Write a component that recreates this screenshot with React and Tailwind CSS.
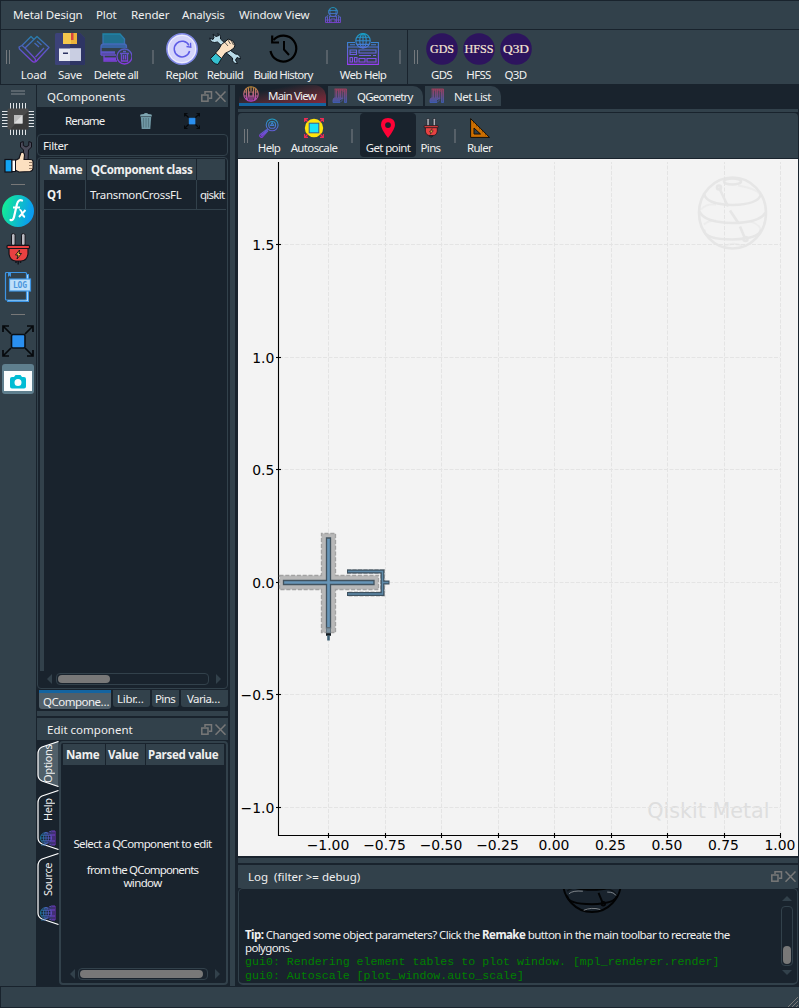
import React from "react";

/* ---------- icons ---------- */

const Svg = ({ s = 32, vb = 32, children, className = "" }) => (
  <svg width={s} height={s} viewBox={`0 0 ${vb} ${vb}`} fill="none" className={`block shrink-0 ${className}`}>
    {children}
  </svg>
);

const Grad = ({ id, a = "#1b86a4", b = "#8a35e0", horizontal = false }) => (
  <defs>
    <linearGradient id={id} x1="0" y1="0" x2={horizontal ? "32" : "0"} y2={horizontal ? "0" : "32"} gradientUnits="userSpaceOnUse">
      <stop offset="0" stopColor={a} />
      <stop offset="1" stopColor={b} />
    </linearGradient>
  </defs>
);

const LoadIcon = () => (
  <Svg>
    <Grad id="g-load" />
    <g stroke="url(#g-load)" strokeWidth="1.3" strokeLinejoin="round">
      <path d="M1 14 L4 12.5 L7 15 L19 3.5 L31 14.5 L18 28.5 Q16 30 14 28 L1.5 16 Z" />
      <path d="M7 15 L17 25.5 Q18 27 17 28.5 M4 12.5 L13 3.5 L16 6.5 M19 8 L23.5 12 M16.5 10 L21 14 M26 15 L17.5 24" />
    </g>
  </Svg>
);

const SaveIcon = () => (
  <Svg>
    <path d="M1 1.5 Q1 0 2.5 0 H26 L31 5 V30.5 Q31 32 29.500 32 H2.500 Q1 32 1 30.500 Z" fill="#3c4279" />
    <path d="M16 0 H26 L31 5 V30.500 Q31 32 29.500 32 H16 Z" fill="#2e3563" />
    <path d="M9 0 H23 V11 H9 Z" fill="#f5c84c" />
    <path d="M17 0 H23 V11 H17 Z" fill="#eab23a" />
    <path d="M17 0 H19.500 V7 H17 Z" fill="#d9433f" />
    <path d="M5 15.500 H27 V28 H5 Z" fill="#e6e9f2" />
    <path d="M16 15.500 H27 V28 H16 Z" fill="#c9cee2" />
    <path d="M9 19.500 H14 V21 H9 Z" fill="#2e3563" />
  </Svg>
);

const DeleteIcon = () => (
  <Svg>
    <Grad id="g-del" a="#1b86a4" b="#8a35e0" />
    <path d="M3 11 V1 H20 L24.500 6 V11 Z" fill="#20708f" />
    <path d="M1 14 Q1 11 4 11 H24 Q26.500 11 26.500 14 V15 H1 Z" fill="#3763a2" />
    <g stroke="url(#g-del)" strokeWidth="1.300">
      <path d="M3 12 V1 H20 L24.500 6 V12 M1 22 V14 Q1 11 4 11 H24 Q26.500 11 26.500 14 V15 M1 22 H16 M4 22 V28 H17" />
      <path d="M4 26 H16" strokeWidth="3.200" />
      <path d="M1 19.500 H15" strokeWidth="2.500" />
      <circle cx="24.500" cy="23.500" r="7.500" fill="#32414b" />
      <path d="M20 20.500 H29 M21.500 20.500 V28 H27.500 V20.500 M23 18.500 H26 M23.500 22 V26.500 M25.500 22 V26.500" />
    </g>
  </Svg>
);

const ReplotIcon = () => (
  <Svg>
    <circle cx="16" cy="16" r="15.200" fill="#d4d4fb" stroke="#7f88e6" strokeWidth="1.500" />
    <circle cx="16" cy="16" r="13.700" stroke="#f0f0ff" strokeWidth="1" />
    <path d="M23 12.500 A7.800 7.800 0 1 0 23.600 18" stroke="#5e5ce6" strokeWidth="1.500" />
    <path d="M20.500 13.500 L24.800 14.200 L24.500 9.800" stroke="#5e5ce6" strokeWidth="1.300" />
  </Svg>
);

const RebuildIcon = () => (
  <Svg>
    <g stroke="#101820" strokeWidth="1" strokeLinejoin="round">
      <path d="M4 1 L7 3.500 L10 2.500 L8.500 .6 Q12 1 11.500 6 L19 13 L16 16 L8.500 9 Q2 11 .6 5 L4 6.500 L5 4.500 Z" fill="#b9dbe8" />
      <path d="M1.500 25.500 L7 20 L12.500 25.500 L9 31.500 Q4 31 1.500 25.500 Z" fill="#35c0cf" />
      <path d="M18 15 L26.500 21 Q31 21 31.500 26 L28 24.500 L26.500 27 L28.500 30.500 Q23 31 23.500 25 L15 18 Z" fill="#b9dbe8" />
      <path d="M6.500 20 L10 16 L12.500 11.500 L17 8 L19 6 L24 8 L26 12 L25 15 L20 18.500 L16.500 20 L12.500 25.500 Z" fill="#fbe1c3" />
      <path d="M18.500 6.500 L21.500 11 M15.500 9 L19 13 M22.500 8 L24.500 12" strokeWidth=".7" />
    </g>
  </Svg>
);

const HistoryIcon = () => (
  <Svg>
    <path d="M6.500 7 A13 13 0 1 1 3.500 18" stroke="#000" strokeWidth="2.200" />
    <path d="M5.200 2.500 V9.500 H12" stroke="#000" strokeWidth="2.200" />
    <path d="M17 8 V16.500 L22 22" stroke="#000" strokeWidth="2" />
  </Svg>
);

const GlobeLines = ({ cx, cy, r }) => (
  <>
    <circle cx={cx} cy={cy} r={r} />
    <ellipse cx={cx} cy={cy} rx={r * 0.45} ry={r} />
    <path d={`M${cx - r} ${cy} H${cx + r} M${cx} ${cy - r} V${cy + r} M${cx - r * 0.85} ${cy - r * 0.5} H${cx + r * 0.85} M${cx - r * 0.85} ${cy + r * 0.5} H${cx + r * 0.85}`} />
  </>
);

const WebHelpIcon = () => (
  <Svg>
    <Grad id="g-web" a="#12a2c4" b="#9a3cf5" />
    <g stroke="url(#g-web)" strokeWidth="1.100">
      <path d="M8 9.500 H.6 V31.400 H31.400 V9.500 H24" />
      <GlobeLines cx={16} cy={7.800} r={7.200} />
      <path d="M.6 14 H31.400 M3 11.800 H8 M24 11.800 H29 M3 17 H9.500 V21.500 H3 Z M3 19.200 H9.500 M12 17 H29 V20 H12 Z M12 22.500 H24 M26 22.500 H29 M3 24.500 H5.500 V29 H3 Z M7.500 24.500 H10 V29 H7.500 Z M12 25.500 H18 V29 H12 Z M20 25.500 H29 V29 H20 Z" />
    </g>
  </Svg>
);

const MenuGlobeIcon = () => (
  <Svg s={16} vb={32}>
    <Grad id="g-mg" a="#1b9abf" b="#7b3fd0" />
    <g stroke="url(#g-mg)" strokeWidth="1.800">
      <circle cx="16" cy="10" r="9" />
      <path d="M10 3 V17 M22 3 V17 M7 7 H25 M8 13 H24 M6 16 L4 20 H1 V31 H12 V24 H20 V31 H31 V20 H28 L26 16 M8 19 H24 M5 20 V31 M9 20 V31 M23 20 V31 M27 20 V31 M1 26 H12 M20 26 H31 M12 31 H20" />
    </g>
  </Svg>
);

const Disc = ({ children }) => (
  <Svg>
    <circle cx="16" cy="16" r="15.800" fill="#2d145e" />
    <text x="16" y="19.800" textAnchor="middle" fontFamily="'Liberation Serif', serif" fontSize="12" letterSpacing="0" fill="#f7e6d4" stroke="#f7e6d4" strokeWidth=".2" textLength={children === "HFSS" ? 29 : children === "Q3D" ? 26 : 24} lengthAdjust="spacingAndGlyphs">
      {children}
    </text>
  </Svg>
);

const ChipIcon = () => (
  <Svg>
    <path d="M8.500 0 V32 M11.500 0 V32 M14.500 0 V32 M17.500 0 V32 M20.500 0 V32 M23.500 0 V32 M0 8.500 H32 M0 11.500 H32 M0 14.500 H32 M0 17.500 H32 M0 20.500 H32 M0 23.500 H32" stroke="#dfe3e6" strokeWidth="1" />
    <rect x="5.500" y="5.500" width="21" height="21" rx="1.500" fill="#4a4a4a" />
    <path d="M26.500 8 V25.500 Q26.500 26.500 25.500 26.500 H8 Z" fill="#3a3a3a" />
    <rect x="12" y="12" width="8.500" height="8.500" fill="#bdbdbd" />
    <path d="M20.500 12 V20.500 H12 Z" fill="#dcdcdc" />
  </Svg>
);

const ThumbIcon = () => (
  <Svg>
    <path d="M18.500 1.500 V6 L21.500 9 V14 L22 20 H26 L26.500 9 L29.500 6 V1.500 L26.800 .6 V4.500 L24 6 L21.300 4.500 V.6 Z" fill="#4b4b5a" stroke="#101018" strokeWidth="1" />
    <path d="M13 19.500 L17 17.500 L19 11.500 Q22 10.500 22.500 14 L22 18.500 H28 Q31 18.500 31 20.500 V27 Q31 30 28 30.500 L17 31 L13 29 Z" fill="#fce0c0" stroke="#101018" strokeWidth="1.100" />
    <path d="M27 21.500 H30.500 M27 24.500 H30.500 M27 27.500 H30.500" stroke="#7c6350" strokeWidth=".8" />
    <rect x="3" y="18.500" width="7" height="12.500" fill="#12a5f4" stroke="#101018" strokeWidth="1.200" />
    <rect x="10" y="19" width="3.500" height="11.500" fill="#fff" stroke="#101018" strokeWidth="1" />
  </Svg>
);

const FxIcon = () => (
  <Svg>
    <defs>
      <linearGradient id="g-fx" x1="0" y1="0" x2="1" y2=".25">
        <stop offset="0" stopColor="#14f58c" />
        <stop offset="1" stopColor="#0a9cf0" />
      </linearGradient>
    </defs>
    <circle cx="16" cy="16" r="16" fill="url(#g-fx)" />
    <path d="M20 5.500 Q16.500 4 15 9 L12 22 Q11 26 8.500 25" stroke="#fff" strokeWidth="2.200" strokeLinecap="round" />
    <path d="M11 12.500 H18" stroke="#fff" strokeWidth="2" />
    <path d="M17.500 15 Q19 14.500 20 18 T23 22 M23.500 15 L17 22" stroke="#fff" strokeWidth="1.900" />
  </Svg>
);

const PlugIcon = ({ s = 32 }) => (
  <Svg s={s}>
    <rect x="9.500" y=".6" width="3.600" height="12" rx="1.500" fill="#b9b9c0" stroke="#15151c" strokeWidth="1" />
    <rect x="19.500" y=".6" width="3.600" height="12" rx="1.500" fill="#b9b9c0" stroke="#15151c" strokeWidth="1" />
    <path d="M7 15 H26 V21 Q25 28 19 28 H14 Q8 28 7 21 Z" fill="#e84141" stroke="#15151c" strokeWidth="1.200" />
    <rect x="5" y="12.300" width="22.500" height="3.200" rx="1" fill="#e84141" stroke="#15151c" strokeWidth="1.200" />
    <path d="M17.500 17 L13.500 22 H16 L15 26 L19.500 20.500 H17 Z" fill="#f9c440" stroke="#15151c" strokeWidth=".9" />
    <path d="M14 28 V30 M18.500 28 V30 M16.200 28 V31.500" stroke="#15151c" strokeWidth="1.500" />
  </Svg>
);

const LogIcon = () => (
  <Svg>
    <rect x="5.500" y="3.500" width="21" height="27" fill="#b6dcf8" stroke="#3d95e4" strokeWidth="1" />
    <rect x="3.500" y="1.500" width="21" height="27.500" rx="1" fill="#32414b" stroke="#3d95e4" strokeWidth="1.200" />
    <path d="M6 2 V6 L7.500 4.500 L9 6 V2" fill="#3d95e4" />
    <rect x="7.500" y="8" width="21" height="12" fill="#bfe0fa" stroke="#3d95e4" strokeWidth="1.200" />
    <text x="18" y="17" textAnchor="middle" fontFamily="'DejaVu Sans Mono', monospace" fontWeight="700" fontSize="8" fill="#4c97dd" textLength="14">LOG</text>
  </Svg>
);

const FitIcon = ({ s = 32 }) => (
  <Svg s={s}>
    <path d="M9 9 L1.500 1.500 M23 9 L30.500 1.500 M9 23 L1.500 30.500 M23 23 L30.500 30.500 M1 7 V1 H7 M25 1 H31 V7 M1 25 V31 H7 M25 31 H31 V25" stroke="#06090c" strokeWidth={s > 20 ? 1.7 : 2.4} />
    <rect x="9.500" y="9.500" width="13.500" height="13.500" rx="1.500" fill="#2a8fef" stroke="#0a0f14" strokeWidth={s > 20 ? 1.6 : 0.4} />
  </Svg>
);

const TrashIcon = () => (
  <svg width="12" height="16" viewBox="0 0 12 16" className="block">
    <path d="M.2 2.500 Q0 1.300 2 1.200 L4 1 Q4 0 6 0 Q8 0 8 1 L10 1.200 Q12 1.300 11.800 2.500 V3.500 H.2 Z" fill="#7fa6b2" />
    <path d="M.8 4 H11.200 L10.300 16 H1.700 Z" fill="#6f97a4" />
    <path d="M3.500 5 V14.500 M6 5 V14.500 M8.500 5 V14.500" stroke="#51717c" strokeWidth=".8" />
  </svg>
);

const SearchIcon = () => (
  <Svg s={20}>
    <Grad id="g-search" a="#1ba4c4" b="#8a35e0" />
    <g stroke="url(#g-search)" strokeWidth="1.700">
      <circle cx="21" cy="11" r="9.500" />
      <circle cx="21" cy="11" r="5.500" />
      <path d="M18.500 12 L21 7.500 L23.500 12 Z M14 18 L11 20 M11.500 19 L2 26 Q0 29 2 30 Q4 32 6 30 L14 21 Z" />
      <path d="M3.500 28.500 L12 21" strokeWidth="3" />
    </g>
  </Svg>
);

const AutoscaleIcon = () => (
  <Svg s={20} vb={20}>
    <circle cx="10" cy="10" r="9.200" fill="#ffe40a" />
    <rect x="5.200" y="5.200" width="9.600" height="9.600" fill="#19e3f8" stroke="#2c5d9a" strokeWidth="1" />
    <g stroke="#ee2c55" strokeWidth="1.100">
      <path d="M4 4 L1 1 M16 4 L19 1 M4 16 L1 19 M16 16 L19 19 M.6 4 V.6 H4 M16 .6 H19.400 V4 M.6 16 V19.400 H4 M16 19.400 H19.400 V16" />
    </g>
  </Svg>
);

const PinIcon = () => (
  <Svg s={20} vb={20}>
    <path fillRule="evenodd" d="M10 0 Q17 0 17 7 Q17 11 10 20 Q3 11 3 7 Q3 0 10 0 Z M10 4.200 A2.900 2.900 0 1 0 10 10 A2.900 2.900 0 1 0 10 4.200 Z" fill="#ff0236" />
  </Svg>
);

const RulerIcon = () => (
  <Svg s={20} vb={20}>
    <path fillRule="evenodd" d="M.6 .6 L19.500 19.400 H.6 Z M4 10 V16 H10.500 Z" fill="#cc6e00" stroke="#14100a" strokeWidth="1" />
    <path d="M3 5 L4.500 4.500 M6 8 L7.500 7.500 M9 11 L10.500 10.500 M12 14 L13.500 13.500 M15 17 L16.500 16.500" stroke="#5b3400" strokeWidth=".8" />
  </Svg>
);

const MainTabIcon = () => (
  <Svg s={16} vb={32}>
    <Grad id="g-mt" a="#c09030" b="#b03ad0" />
    <g stroke="url(#g-mt)" strokeWidth="2.300">
      <circle cx="16" cy="16" r="14.500" />
      <path d="M7 5 V27 M11 3 V18 L9 29 M16 2 V10 M21 3 V18 L23 29 M25 5 V27 M12 12 H20 V20 H12 Z M14 20 V30 M18 20 V30 M2 12 H7 M25 12 H30 M2 20 H7 M25 20 H30" />
    </g>
  </Svg>
);

const LayersTabIcon = ({ id }) => (
  <Svg s={16} vb={32}>
    <Grad id={id} a="#a83c56" b="#3560c0" />
    <path d="M5 2 H29 V29 H25 V22 H19 V20 H5 Z" fill={`url(#${id})`} opacity=".65" />
    <path d="M4 20 H20 L16 24 V29 H2 V24 Z" fill={`url(#${id})`} opacity=".8" />
    <g stroke={`url(#${id})`} strokeWidth="1.800">
      <path d="M5 2 H29 V29 H25 V4 M9 2 V20 M13 2 V20 M17 2 V20 M21 2 V22 M4 20 H20 L16 24 H2 Z M2 24 V29 H16 L20 25 V20" />
    </g>
    <path d="M11 6 V19 M19.500 6 V19 M23 8 V28" stroke="#32414b" strokeWidth="1.200" />
  </Svg>
);

const SideTabIcon = ({ id }) => (
  <Svg s={16} vb={32}>
    <Grad id={id} a="#1b84a8" b="#8a35e0" horizontal />
    <g stroke={`url(#${id})`} strokeWidth="1.700">
      <GlobeLines cx={12} cy={16} r={11} />
      <path d="M18 4 Q22 1 30 2 V30 Q22 31 18 28 M22 3 V29 M26 2 V30 M22 10 H30 M22 22 H30 M2 30 H12" />
    </g>
  </Svg>
);

const DockButtons = () => (
  <svg width="26" height="12" viewBox="0 0 26 12" fill="none" className="block">
    <path d="M4 3 V.8 H10.500 V7.300 H8" stroke="#787878" strokeWidth="1.500" />
    <rect x=".8" y="4" width="6.200" height="6.200" stroke="#787878" strokeWidth="1.500" />
    <path d="M14.500 .5 L24.500 10.800 M24.500 .5 L14.500 10.800" stroke="#787878" strokeWidth="1.500" />
  </svg>
);

/* ---------- small building blocks ---------- */

const Handle = ({ className = "" }) => (
  <div className={`flex w-[4px] shrink-0 justify-between ${className}`}>
    <div className="w-px bg-[#74797d]" />
    <div className="w-px bg-[#74797d]" />
  </div>
);

const Sep = ({ className = "" }) => (
  <div className={`flex shrink-0 justify-center ${className}`}>
    <div className="h-full w-[2px] bg-[#566068]" />
  </div>
);

const Tool = ({ icon, label, className = "" }) => (
  <div className={`flex shrink-0 flex-col items-center ${className}`}>
    {icon}
    <div className="mt-[2px] h-4 leading-4 whitespace-nowrap">{label}</div>
  </div>
);

const Title = ({ children, className = "" }) => (
  <div className={`flex shrink-0 items-center justify-between bg-[#32414b] pr-[1px] ${className}`}>
    <div className="whitespace-pre">{children}</div>
    <DockButtons />
  </div>
);

const Arrow = ({ dir }) => {
  const d = { left: "M5 0 V10 L0 5 Z", right: "M0 0 V10 L5 5 Z", up: "M0 5 H10 L5 0 Z", down: "M0 0 H10 L5 5 Z" }[dir];
  const wide = dir === "up" || dir === "down";
  return (
    <svg width={wide ? 10 : 5} height={wide ? 5 : 10} className="block shrink-0">
      <path d={d} fill="#32414b" />
    </svg>
  );
};

const Menu = () => (
  <div className="mt-px ml-px flex h-[28px] shrink-0 items-center bg-[#32414b] pl-[12px] tracking-[-0.12px]">
    <div className="w-[83px]">Metal Design</div>
    <div className="w-[35px]">Plot</div>
    <div className="w-[51px]">Render</div>
    <div className="w-[57px]">Analysis</div>
    <div className="w-[86px]">Window View</div>
    <MenuGlobeIcon />
  </div>
);

const TopToolbar = () => (
  <div className="mt-px ml-px flex h-[54px] shrink-0">
    <div className="flex w-[406px] shrink-0 bg-[#32414b] pt-[3px] pl-[5px]">
      <Handle className="mt-[17px] h-[14px]" />
      <Tool className="ml-[5px] w-[37px] tracking-[-0.3px]" icon={<LoadIcon />} label="Load" />
      <Tool className="w-[36px] tracking-[-0.3px]" icon={<SaveIcon />} label="Save" />
      <Tool className="w-[56px] tracking-[-0.6px]" icon={<DeleteIcon />} label="Delete all" />
      <Sep className="mt-[17px] h-[14px] w-[17px]" />
      <Tool className="w-[41px] tracking-[-0.45px]" icon={<ReplotIcon />} label="Replot" />
      <Tool className="w-[46px] tracking-[-0.65px]" icon={<RebuildIcon />} label="Rebuild" />
      <Tool className="w-[70px] tracking-[-0.8px]" icon={<HistoryIcon />} label="Build History" />
      <Sep className="mt-[17px] h-[14px] w-[17px]" />
      <Tool className="w-[56px] tracking-[-0.7px]" icon={<WebHelpIcon />} label="Web Help" />
      <Sep className="mt-[17px] h-[14px] w-[18px]" />
    </div>
    <div className="ml-px flex flex-1 bg-[#32414b] pt-[3px] pl-[6px] tracking-[-0.7px]">
      <Handle className="mt-[17px] h-[14px]" />
      <Tool className="ml-[5px] w-[37px]" icon={<Disc>GDS</Disc>} label="GDS" />
      <Tool className="w-[37px]" icon={<Disc>HFSS</Disc>} label="HFSS" />
      <Tool className="w-[37px]" icon={<Disc>Q3D</Disc>} label="Q3D" />
    </div>
  </div>
);

const SideBar = () => (
  <div className="flex w-[36px] shrink-0 flex-col items-center bg-[#32414b] pt-[5px]">
    <div className="flex h-[5px] w-[14px] flex-col justify-between">
      <div className="h-[2px] bg-[#59646c]" />
      <div className="h-[2px] bg-[#59646c]" />
    </div>
    <div className="mt-[8px]"><ChipIcon /></div>
    <div className="mt-[6px]"><ThumbIcon /></div>
    <div className="mt-[11px] h-px w-[14px] bg-[#787878]" />
    <div className="mt-[10px]"><FxIcon /></div>
    <div className="mt-[6px]"><PlugIcon /></div>
    <div className="mt-[6px]"><LogIcon /></div>
    <div className="mt-[11px] h-px w-[14px] bg-[#787878]" />
    <div className="mt-[10px]"><FitIcon /></div>
    <div className="mt-[7px] flex h-[30px] w-[32px] justify-center rounded-[3px] bg-[#5f7f8e] pt-[7px]">
      <svg width="28" height="20" viewBox="0 0 28 20">
        <rect width="28" height="20" fill="#fbfdfd" />
        <path fillRule="evenodd" d="M6 8 Q6 6 8 6 H10 L11.500 4 H16.500 L18 6 H20 Q22 6 22 8 V15.500 Q22 17.500 20 17.500 H8 Q6 17.500 6 15.500 Z M14 8 A3.500 3.500 0 1 0 14 15 A3.500 3.500 0 1 0 14 8 Z" fill="#00bcd4" />
      </svg>
    </div>
  </div>
);

const ComponentsPanel = () => (
  <div className="flex h-[625px] shrink-0 flex-col">
    <Title className="h-[22px] pt-px pl-[10px]">QComponents</Title>
    <div className="flex h-[27px] shrink-0 items-center">
      <div className="w-[103px] pl-[28px] tracking-[-0.85px]">Rename</div>
      <TrashIcon />
      <div className="ml-[32px]"><FitIcon s={16} /></div>
    </div>
    <div className="flex h-[22px] shrink-0 items-center rounded-[4px] border border-[#32414b] pt-px pl-[5px] tracking-[-0.4px]">Filter</div>
    <div className="mt-px flex h-[532px] shrink-0 flex-col rounded-[4px] border border-[#32414b] pt-px pr-[2px] pl-[2px]">
      <div className="flex h-[512px] bg-[#19232d]">
        <div className="w-[4px] shrink-0 bg-[#32414b]" />
        <div className="w-[182px] shrink-0">
          <div className="flex h-[21px] gap-px font-bold leading-[22px] whitespace-nowrap tracking-[-0.35px]">
            <div className="w-[42px] shrink-0 bg-[#32414b] pl-[5px] tracking-[-0.2px]">Name</div>
            <div className="w-[109px] shrink-0 bg-[#32414b] pl-[4px]">QComponent class</div>
            <div className="w-[28px] shrink-0 bg-[#32414b]" />
          </div>
          <div className="flex h-[30px] border-b border-[#32414b] leading-[30px] whitespace-nowrap tracking-[-0.3px]">
            <div className="w-[42px] shrink-0 border-r border-[#32414b] pl-[3px] font-bold">Q1</div>
            <div className="w-[111px] shrink-0 border-r border-[#32414b] pl-[4px]">TransmonCrossFL</div>
            <div className="w-[28px] shrink-0 pl-[3px] tracking-[-0.75px]">qiskit</div>
          </div>
        </div>
      </div>
      <div className="mt-[2px] flex h-[12px] items-center pl-[7px]">
        <Arrow dir="left" />
        <div className="ml-[4px] h-[12px] w-[153px] rounded-[4px] border border-[#32414b] p-px">
          <div className="h-[8px] w-[52px] rounded-[4px] bg-[#787878]" />
        </div>
        <div className="ml-[7px]"><Arrow dir="right" /></div>
      </div>
    </div>
    <div className="mt-[1px] flex h-[19px] shrink-0 gap-[2px] pl-[2px] tracking-[-0.3px]">
      <div className="h-[19px] w-[72px] rounded-b-[3px] border-t-[3px] border-[#1464a0] bg-[#505f69] pl-[4px] leading-[17px] tracking-[-0.5px] whitespace-nowrap">QCompone…</div>
      <div className="h-[17px] w-[37px] rounded-b-[3px] bg-[#32414b] pl-[4px] leading-[18px]">Libr…</div>
      <div className="h-[17px] w-[27px] rounded-b-[3px] bg-[#32414b] pl-[3px] leading-[18px] tracking-[-0.6px]">Pins</div>
      <div className="h-[17px] w-[47px] rounded-b-[3px] bg-[#32414b] pl-[6px] leading-[18px] tracking-[-0.6px]">Varia…</div>
    </div>
  </div>
);

const SideTab = ({ label, h, active = false, icon = null, className = "" }) => (
  <div className={`relative w-[22px] shrink-0 ${className}`}>
    <svg width="22" height={h} className="absolute inset-0 block">
      <path d={`M21.500 .5 L5 6 Q1 8 1 13 V${h - 12} Q1 ${h - 8} 5 ${h - 6} L21.500 ${h - 0.5}`} fill={active ? "#505f69" : "#19232d"} stroke="#fff" strokeWidth="1.200" />
    </svg>
    <div className="relative flex h-full flex-col items-center justify-between pr-[1px]">
      <div className="flex flex-1 items-center justify-center text-[11px] leading-[14px] tracking-[-0.35px] [writing-mode:vertical-rl] rotate-180">{label}</div>
      {icon}
    </div>
  </div>
);

const EditPanel = () => (
  <div className="flex flex-1 flex-col">
    <Title className="h-[22px] pt-[2px] pl-[10px]">Edit component</Title>
    <div className="flex flex-1 pb-[1px]">
      <div className="flex w-[22px] shrink-0 flex-col pt-px">
        <SideTab label="Options" h={46} active className="h-[46px]" />
        <SideTab label="Help" h={60} className="mt-[3px] h-[60px] pb-[4px]" icon={<SideTabIcon id="g-s1" />} />
        <SideTab label="Source" h={72} className="mt-[3px] h-[72px] pb-[4px]" icon={<SideTabIcon id="g-s2" />} />
      </div>
      <div className="mt-px flex flex-1 flex-col rounded-[4px] border-2 border-[#32414b] px-[2px] pt-[1px]">
        <div className="flex h-[21px] shrink-0 gap-px font-bold leading-[22px] whitespace-nowrap tracking-[-0.25px]">
          <div className="w-[42px] bg-[#32414b] pl-[3px]">Name</div>
          <div className="w-[39px] bg-[#32414b] pl-[2px]">Value</div>
          <div className="w-[78px] bg-[#32414b] pl-[2px]">Parsed value</div>
        </div>
        <div className="mt-[72px] pr-[2px] text-center leading-[13px] whitespace-nowrap tracking-[-0.62px]">
          <div>Select a QComponent to edit</div>
          <div className="mt-[13px] tracking-[-0.85px]">from the QComponents</div>
          <div>window</div>
        </div>
        <div className="mt-auto mb-[3px] flex h-[12px] items-center pl-[7px]">
          <Arrow dir="left" />
          <div className="ml-[3px] h-[12px] w-[130px] rounded-[4px] border border-[#32414b] p-px">
            <div className="h-[8px] w-[123px] rounded-[4px] bg-[#787878]" />
          </div>
          <div className="ml-[7px]"><Arrow dir="right" /></div>
        </div>
      </div>
    </div>
  </div>
);

const ViewTabs = () => (
  <div className="flex h-[22px] shrink-0 gap-[2px] pl-px tracking-[-0.8px]">
    <div className="flex h-[21px] w-[87px] rounded-tr-[12px] border-b-[3px] border-[#1464a0] bg-linear-to-br from-[#19232d] from-30% to-[#84263a] pt-px pl-[4px] whitespace-nowrap">
      <MainTabIcon />
      <span className="pl-[9px] leading-[19px]">Main View</span>
    </div>
    <div className="mt-px flex h-[20px] w-[95px] rounded-tr-[10px] bg-[#32414b] pt-[2px] pl-[4px]">
      <LayersTabIcon id="g-l1" />
      <span className="pl-[9px] leading-[18px]">QGeometry</span>
    </div>
    <div className="mt-px flex h-[20px] w-[76px] rounded-tr-[10px] bg-[#32414b] pt-[2px] pl-[4px]">
      <LayersTabIcon id="g-l2" />
      <span className="pl-[9px] leading-[18px] whitespace-nowrap tracking-[-0.5px]">Net List</span>
    </div>
  </div>
);

const PlotToolbar = () => (
  <div className="flex h-[45px] shrink-0 rounded-t-[4px] bg-[#32414b] pl-[6px] tracking-[-0.65px]">
    <Handle className="mt-[16px] h-[14px]" />
    <Tool className="ml-[6px] w-[30px] pt-[5px]" icon={<SearchIcon />} label="Help" />
    <Tool className="w-[60px] pt-[5px]" icon={<AutoscaleIcon />} label="Autoscale" />
    <Sep className="mt-[16px] h-[14px] w-[16px]" />
    <Tool className="h-[44px] w-[56px] rounded-[4px] bg-[#19232d] pt-[5px]" icon={<PinIcon />} label="Get point" />
    <Tool className="w-[29px] pt-[5px]" icon={<PlugIcon s={20} />} label="Pins" />
    <Sep className="mt-[16px] h-[14px] w-[19px]" />
    <Tool className="w-[31px] pt-[5px]" icon={<RulerIcon />} label="Ruler" />
  </div>
);

/* ---------- plot ---------- */

const X_TICKS = ["−1.00", "−0.75", "−0.50", "−0.25", "0.00", "0.25", "0.50", "0.75", "1.00"];
const Y_TICKS = [["1.5", 244.5], ["1.0", 357.5], ["0.5", 469.5], ["0.0", 582.5], ["−0.5", 694.5], ["−1.0", 807.5]];

const SphereMark = ({ stroke, w = 2.6 }) => (
  <g stroke={stroke} fill="none" strokeWidth={w}>
    <ellipse cx="34.500" cy="36.500" rx="33.500" ry="35.500" />
    <ellipse cx="34.500" cy="5" rx="8.500" ry="3" />
    <path d="M6 17 Q8 28 34.500 28.500 Q60 28 63 18 M1.500 35 Q6 46 34.500 46.500 Q62 46 67.500 36 M6 53 Q6 63 34.500 63 Q62 62 63 53" />
    <path d="M21 11 L30 30 M32 34 L40 46 M42 50 L47 62" />
    <path d="M40 9 Q62 13 63 20 M6 48 Q10 44 18 44 M52 45 Q62 48 63 54 M26 70 Q34 65 44 69 M3 33 Q8 27 18 28" strokeWidth={w * 0.7} opacity=".5" />
    <circle cx="21" cy="11" r="2" />
    <circle cx="47.500" cy="62.500" r="2" />
  </g>
);

const Plot = () => (
  <svg width="560" height="697" viewBox="238 159 560 697" className="block shrink-0 bg-[#f3f3f3]" fontFamily="'DejaVu Sans', sans-serif">
    <g transform="translate(698 176.500)"><SphereMark stroke="#e6e6e6" /></g>
    <text x="769.500" y="817.500" textAnchor="end" fontSize="20.700" fill="#dedede">Qiskit Metal</text>
    <g stroke="#e4e4e4" strokeWidth="1" strokeDasharray="4 1.500">
      {X_TICKS.map((t, i) => <path key={t} d={`M${Math.round(328 + i * 56.5) + 0.5} 835 V162`} />)}
      {Y_TICKS.map(([t, y]) => <path key={t} d={`M279 ${y} H780`} />)}
    </g>
    <g stroke="#000" strokeWidth="1.100">
      <path d="M278.500 162 V835.500 H781" fill="none" />
      {X_TICKS.map((t, i) => <path key={t} d={`M${Math.round(328 + i * 56.5) + 0.5} 833 V838`} />)}
      {Y_TICKS.map(([t, y]) => <path key={t} d={`M276 ${y} H281`} />)}
    </g>
    <g fontSize="13.900" fill="#000">
      {X_TICKS.map((t, i) => <text key={t} x={328 + i * 56.5} y="850" textAnchor="middle">{t}</text>)}
      {Y_TICKS.map(([t, y]) => <text key={t} x="274.300" y={y + 5} textAnchor="end">{t}</text>)}
    </g>
    <g transform="translate(.5 .5)">
      <path d="M279 575 H321 V533 H335 V575 H378 V589 H335 V632 H321 V589 H279 Z" fill="#b8b8b8" stroke="#a2a2a2" strokeWidth="1.300" strokeDasharray="4 1.800" />
      <path d="M346.500 571 H382 V593.500 H346.500" fill="none" stroke="#b4b4b4" strokeWidth="5" strokeDasharray="4 1.500" />
      <path d="M346.500 571 H382 V593.500 H346.500 M382 582 H389" fill="none" stroke="#3e5260" strokeWidth="3.800" />
      <path d="M347.500 571 H382 V593.500 H347.500 M382 582 H388" fill="none" stroke="#5f8baa" strokeWidth="1.400" />
      <path d="M326 537.500 H330 V580 H373.500 V584 H330 V627.500 H326 V584 H283 V580 H326 Z" fill="#6795b7" stroke="#42535f" strokeWidth="1.300" />
      <rect x="326" y="627.500" width="4" height="5" fill="#7890a0" stroke="#67757f" strokeWidth="1" />
      <path d="M325.500 634 H330.500" stroke="#10191f" strokeWidth="2.600" />
      <path d="M328 635 V640" stroke="#3d6075" strokeWidth="2.600" />
    </g>
  </svg>
);

const LogPanel = () => (
  <div className="flex flex-1 flex-col">
    <Title className="h-[23px] pl-[10px]">{"Log  (filter >= debug)"}</Title>
    <div className="mb-[2px] flex flex-1 rounded-[5px] border border-b-2 border-[#32414b] pr-[4px] pl-[6px]">
      <div className="flex-1 leading-[13px]">
        <svg width="60" height="27" viewBox="0 46 69 30" className="ml-[317px] block">
          <SphereMark stroke="#020304" w={2.2} />
          <path d="M8 51 Q12 47 24 48 M52 49 Q60 49 62 53 M25 70 Q34 66 44 69" stroke="#8d9298" strokeWidth="1" fill="none" />
        </svg>
        <div className="mt-[12px] whitespace-nowrap tracking-[-0.555px]"><b>Tip:</b> Changed some object parameters? Click the <b>Remake</b> button in the main toolbar to recreate the</div>
        <div className="tracking-[-0.65px]">polygons.</div>
        <div className="mt-px font-['Liberation_Mono',monospace] text-[11.63px] leading-[14px] whitespace-pre text-[#008000]">
          <div>gui0: Rendering element tables to plot window. [mpl_renderer.render]</div>
          <div>gui0: Autoscale [plot_window.auto_scale]</div>
        </div>
      </div>
      <div className="flex w-[12px] flex-col items-center pt-[7px]">
        <Arrow dir="up" />
        <div className="mt-[5px] flex h-[60px] w-[12px] flex-col justify-end rounded-[4px] border border-[#32414b] p-px">
          <div className="h-[18px] rounded-[4px] bg-[#787878]" />
        </div>
        <div className="mt-[4px]"><Arrow dir="down" /></div>
      </div>
    </div>
  </div>
);

export default function App() {
  return (
    <div className="flex h-[1008px] w-[799px] flex-col overflow-hidden bg-[#19232d] font-['Noto_Sans',sans-serif] text-[11.5px] text-[#f0f0f0]">
      <Menu />
      <TopToolbar />
      <div className="mt-px flex h-[901px] shrink-0">
        <SideBar />
        <div className="ml-px flex w-[191px] shrink-0 flex-col">
          <ComponentsPanel />
          <div className="mt-[1px] mb-[2px] h-[5px] shrink-0 bg-[#32414b]" />
          <EditPanel />
        </div>
        <div className="ml-[2px] w-[5px] shrink-0 bg-[#32414b]" />
        <div className="ml-[3px] flex w-[560px] shrink-0 flex-col">
          <ViewTabs />
          <div className="mt-[2px] mb-[1px] h-[3px] shrink-0 bg-[#32414b]" />
          <PlotToolbar />
          <div className="mt-[1px]"><Plot /></div>
          <div className="mt-[2px] mb-[2px] h-[5px] shrink-0 bg-[#32414b]" />
          <LogPanel />
        </div>
      </div>
      <div className="mt-px mb-px ml-px flex flex-1 items-end justify-end bg-[#32414b] pr-px">
        <svg width="11" height="11" className="block">
          <path d="M1 11 L11 1 M5 11 L11 5 M9 11 L11 9" stroke="#787878" strokeWidth="1" />
        </svg>
      </div>
    </div>
  );
}
